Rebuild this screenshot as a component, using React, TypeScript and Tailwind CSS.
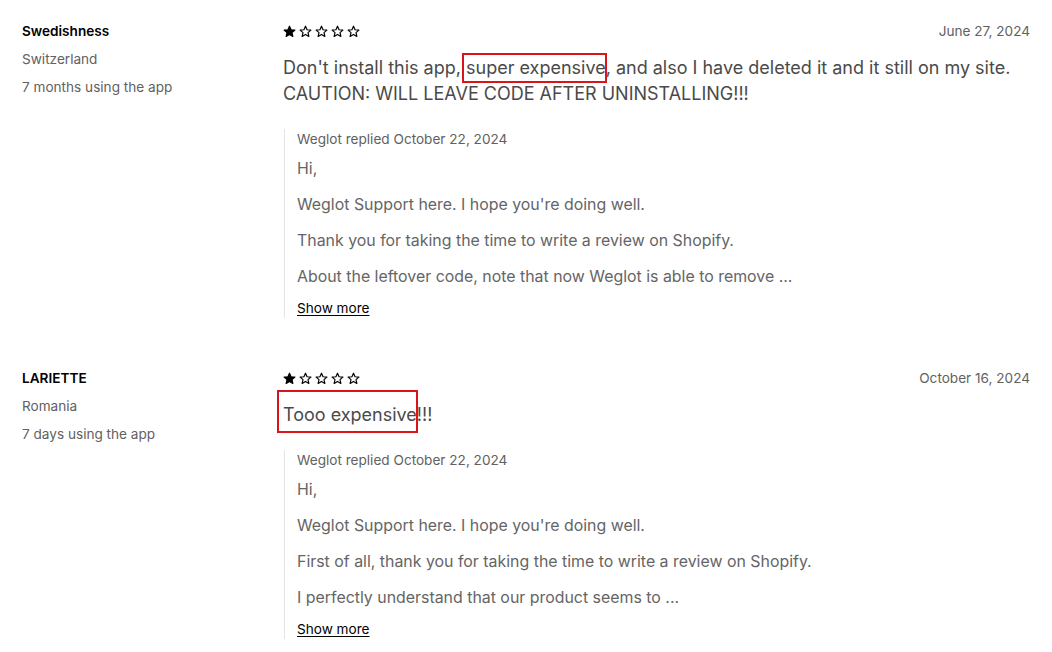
import React from 'react';

type Review = {
  name: string;
  country: string;
  usage: string;
  date: string;
  body: React.ReactNode;
  replyDate: string;
  paragraphs: string[];
};

function Star({ filled }: { filled: boolean }) {
  return (
    <svg width="13" height="13" viewBox="0 0 24 24" className="shrink-0">
      <path
        d="M12 2.2l2.9 6.6 7.1.6-5.4 4.7 1.6 7-6.2-3.7-6.2 3.7 1.6-7L2 9.4l7.1-.6z"
        fill={filled ? '#000' : 'none'}
        stroke="#000"
        strokeWidth="2.2"
        strokeLinejoin="round"
      />
    </svg>
  );
}

function Stars({ count }: { count: number }) {
  return (
    <div className="flex items-center gap-[3px]">
      {[0, 1, 2, 3, 4].map((i) => (
        <Star key={i} filled={i < count} />
      ))}
    </div>
  );
}

const REVIEWS: Review[] = [
  {
    name: 'Swedishness',
    country: 'Switzerland',
    usage: '7 months using the app',
    date: 'June 27, 2024',
    body: (
      <p className="mt-[14px] text-[18px] leading-[26px] text-[#4a4a4a]">
        Don't install this app,{' '}
        <span className="relative inline-block">
          super expensive
          <span className="absolute -left-[4px] -right-[1px] -top-[2px] -bottom-[2px] border-2 border-[#d9141b]" />
        </span>
        , and also I have deleted it and it still on my site. CAUTION: WILL LEAVE CODE AFTER UNINSTALLING!!!
      </p>
    ),
    replyDate: 'October 22, 2024',
    paragraphs: [
      'Hi,',
      "Weglot Support here. I hope you're doing well.",
      'Thank you for taking the time to write a review on Shopify.',
      'About the leftover code, note that now Weglot is able to remove ...',
    ],
  },
  {
    name: 'LARIETTE',
    country: 'Romania',
    usage: '7 days using the app',
    date: 'October 16, 2024',
    body: (
      <p className="relative mt-[14px] text-[18px] leading-[26px] text-[#4a4a4a]">
        Tooo expensive!!!
        <span className="absolute -left-[6px] -top-[12px] w-[141px] h-[43px] border-2 border-[#d9141b]" />
      </p>
    ),
    replyDate: 'October 22, 2024',
    paragraphs: [
      'Hi,',
      "Weglot Support here. I hope you're doing well.",
      'First of all, thank you for taking the time to write a review on Shopify.',
      'I perfectly understand that our product seems to ...',
    ],
  },
];

function ReviewItem({ review }: { review: Review }) {
  return (
    <div className="flex">
      <div className="w-[261px] shrink-0 flex flex-col gap-2 text-[13.6px] leading-5">
        <div className="font-semibold text-black">{review.name}</div>
        <div className="text-[#616161]">{review.country}</div>
        <div className="text-[#616161]">{review.usage}</div>
      </div>

      <div className="flex-1 min-w-0">
        <div className="flex items-center justify-between h-5">
          <Stars count={1} />
          <span className="text-[13.6px] text-[#616161]">{review.date}</span>
        </div>

        {review.body}

        <div className="mt-[22px] ml-px border-l border-[#e3e3e3] pl-[12px]">
          <div className="text-[13.6px] leading-5 text-[#616161]">Weglot replied {review.replyDate}</div>
          <div className="mt-[8px] flex flex-col gap-3 text-[15.9px] leading-6 text-[#656565]">
            {review.paragraphs.map((p) => (
              <p key={p}>{p}</p>
            ))}
          </div>
          <button className="mt-[9px] block text-[13.6px] leading-5 text-black underline underline-offset-2">
            Show more
          </button>
        </div>
      </div>
    </div>
  );
}

export default function App() {
  return (
    <div className="min-h-screen bg-white px-[22px] pt-[21px] font-['Inter',sans-serif]">
      <div className="flex flex-col gap-[50px]">
        {REVIEWS.map((r) => (
          <ReviewItem key={r.name} review={r} />
        ))}
      </div>
    </div>
  );
}
